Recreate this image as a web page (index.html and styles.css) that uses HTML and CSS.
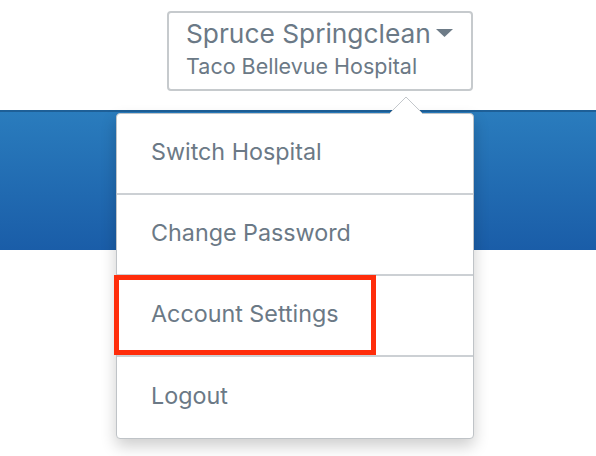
FILE: index.html
```html
<!DOCTYPE html>
<html>
<head>
<meta charset="utf-8">
<link rel="stylesheet" href="styles.css">
</head>
<body>
<div class="page">
  <div class="top">
    <div class="account">
      <div class="name-row">
        <span class="name">Spruce Springclean</span>
        <svg class="caret" width="17" height="8" viewBox="0 0 17 8"><polygon points="0,0 17,0 8.5,8" fill="#6d7b87"/></svg>
      </div>
      <div class="hospital">Taco Bellevue Hospital</div>
    </div>
  </div>
  <div class="band"></div>
  <div class="menu">
    <svg class="pointer" width="36" height="19" viewBox="0 0 36 19"><polygon points="0.5,18.5 18,1 35.5,18.5" fill="#fff" stroke="#c3c7cb" stroke-width="1"/><rect x="0" y="18" width="36" height="2" fill="#fff"/></svg>
    <div class="item">Switch Hospital</div>
    <div class="item">Change Password</div>
    <div class="item highlighted">Account Settings</div>
    <div class="item">Logout</div>
  </div>
</div>
</body>
</html>
```

FILE: styles.css
```css
html, body {
  margin: 0;
  padding: 0;
  background: #fff;
}
.page {
  position: relative;
  width: 596px;
  height: 456px;
  overflow: hidden;
  font-family: Inter, Lato, sans-serif;
  color: #6b7986;
}
.top {
  height: 110px;
  padding: 11px 0 0 167px;
  box-sizing: border-box;
}
.account {
  width: 306px;
  height: 80px;
  box-sizing: border-box;
  border: 2px solid #c6cacd;
  border-radius: 4px;
  padding: 5px 0 0 17px;
}
.name-row {
  display: flex;
  align-items: center;
  gap: 5px;
}
.name {
  font-size: 26.3px;
  line-height: 32px;
}
.caret {
  margin-top: -3px;
}
.hospital {
  font-size: 21.5px;
  line-height: 24px;
  margin-top: 4px;
}
.band {
  height: 140px;
  background: linear-gradient(#2a7cbd, #1a5da8);
  border-top: 2px solid #1e5f97;
  box-sizing: border-box;
}
.menu {
  position: absolute;
  left: 116px;
  top: 113px;
  width: 356px;
  background: #fff;
  border: 1px solid #bfc3c7;
  border-radius: 4px;
  box-shadow: 0 7px 16px rgba(0,0,0,0.2);
}
.pointer {
  position: absolute;
  left: 271px;
  top: -18px;
}
.item {
  height: 81px;
  box-sizing: border-box;
  padding-left: 34px;
  padding-bottom: 4px;
  display: flex;
  align-items: center;
  font-size: 23.3px;
  border-bottom: 2px solid #ccd0d4;
  position: relative;
}
.item:last-child {
  border-bottom: none;
}
.highlighted::after {
  content: "";
  position: absolute;
  left: -3px;
  top: -1px;
  width: 262px;
  height: 80px;
  box-sizing: border-box;
  border: 5px solid #ff2d0b;
}
```
